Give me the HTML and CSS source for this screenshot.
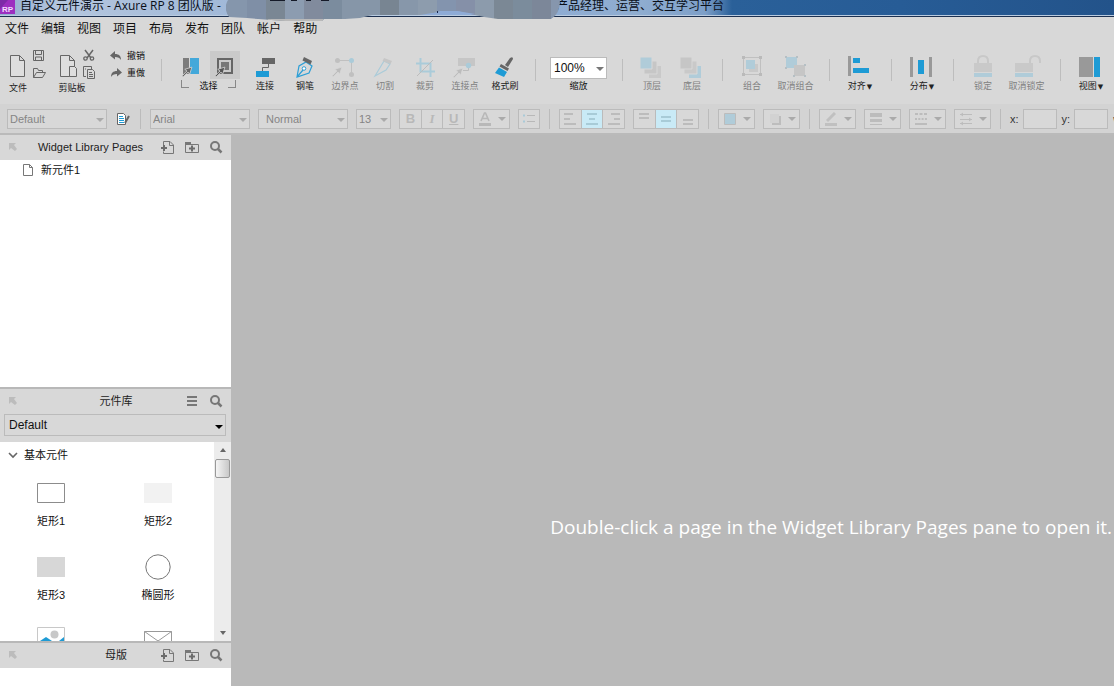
FILE: index.html
```html
<!DOCTYPE html>
<html lang="zh-CN">
<head>
<meta charset="utf-8">
<title>自定义元件演示 - Axure RP 8 团队版</title>
<link rel="stylesheet" href="styles.css">
</head>
<body>
<svg class="defs" aria-hidden="true">
  <symbol id="i-dock" viewBox="0 0 8 8"><path d="M0 0h7L5 2l3 4-2 2-4-3-2 2z" fill="#bcbcbc"/></symbol>
  <symbol id="i-addpage" viewBox="0 0 14 14"><path d="M2.500 5V1.500h6.500l3.500 3.500v8.500h-10v-2M8.500 1.500v4h4" fill="none" stroke="#777"/><path d="M0 8h6M3 5v6" stroke="#6c6c6c" stroke-width="2"/></symbol>
  <symbol id="i-addfolder" viewBox="0 0 14 14"><path d="M.5 12.500v-10h5v2h8v8z" fill="none" stroke="#777"/><path d="M0 2h6v3H0z" fill="#777"/><path d="M4 8.500h6M7 5.500v6" stroke="#6c6c6c" stroke-width="2"/></symbol>
  <symbol id="i-search" viewBox="0 0 14 14"><circle cx="6" cy="6" r="4" fill="none" stroke="#777" stroke-width="2"/><path d="M8.500 8.500l4 4" stroke="#777" stroke-width="2.500"/></symbol>
  <symbol id="i-pointer" viewBox="0 0 10 10"><path d="M9 1L2.500 3l2 1.500L0 9l1 1 4.500-4.500L7 7.500z" fill="currentColor" stroke="#d8d8d8" stroke-width=".7"/></symbol>
</svg>

<header class="titlebar">
  <svg class="logo" viewBox="0 0 15 14"><rect width="15" height="14" fill="#9c2fc0"/><path d="M0 0h8L0 9z" fill="#7d2aa8"/><text x="2" y="12" class="logo-text">RP</text></svg>
  <span class="title-left">自定义元件演示 - Axure RP 8 团队版 -</span>
  <span class="title-right">产品经理、运营、交互学习平台</span>
  <svg class="mosaic" viewBox="226 0 336 21" width="336" height="21">
    <defs><clipPath id="blob"><path d="M228 0Q223 8 229 17L247 18 258 19 285 21H322L324 19H345L360 18 372 15 420 15 432 13H445L457 11 475 15 484 17 498 19H551Q560 14 560 0z"/></clipPath></defs>
    <g clip-path="url(#blob)">
      <path fill="#8596ac" d="M226 0h21v21h-21z"/><path fill="#7f8fa6" d="M247 0h19v21h-19z"/><path fill="#7a8794" d="M266 0h19v21h-19z"/><path fill="#8c9cb0" d="M285 0h19v21h-19z"/><path fill="#818b9d" d="M304 0h19v21h-19z"/><path fill="#7b8c9e" d="M323 0h19v21h-19z"/><path fill="#8696a8" d="M342 0h38v21h-38z"/><path fill="#788592" d="M380 0h19v21h-19z"/><path fill="#8797aa" d="M399 0h19v21h-19z"/><path fill="#8d9cad" d="M418 0h19v21h-19z"/><path fill="#8394ae" d="M437 0h19v21h-19z"/><path fill="#8590a8" d="M456 0h19v21h-19z"/><path fill="#8c9bac" d="M475 0h19v21h-19z"/><path fill="#7b8895" d="M494 0h19v21h-19z"/><path fill="#7b8c9c" d="M513 0h19v21h-19z"/><path fill="#7c8799" d="M532 0h19v21h-19z"/><path fill="#8696ad" d="M551 0h11v21h-11z"/>
      <path fill="#b9b9b9" d="M268 19h55v2h-55z"/>
    </g>
    <path d="M270 .5h15M291 .5h6M306 .5h5M321 .5h8" stroke="#151a28"/>
    <path d="M430 14l10-3h17l18 3z" fill="#8eabd6"/><path d="M437.500 11v2" stroke="#17264a"/>
  </svg>
</header>

<nav class="menubar">
  <button>文件</button><button>编辑</button><button>视图</button><button>项目</button><button>布局</button><button>发布</button><button>团队</button><button>帐户</button><button>帮助</button>
</nav>

<section class="toolbar" aria-label="工具栏">
  <div class="filegroup">
    <button class="tool low"><svg viewBox="0 0 18 28" width="18" height="28"><path d="M1.500 3.500h9l5 5v16h-14zM10.500 3.500v5h5" fill="#dedede" stroke="#666"/></svg>文件</button>
    <div class="stack">
      <button aria-label="保存"><svg viewBox="0 0 14 13" width="14" height="13"><path d="M1.500 1.500h10v10h-10zM3.500 1.500v4h6v-4M3.500 11v-3h6v3" fill="none" stroke="#666"/></svg></button>
      <button aria-label="打开"><svg viewBox="0 0 14 13" width="14" height="13"><path d="M1.500 11.500v-9h4l1 2h4v2M1.500 11.500l3-5h9l-3 5z" fill="none" stroke="#666"/></svg></button>
    </div>
    <button class="tool low paste"><svg viewBox="0 0 22 28" width="22" height="28"><path d="M2.500 3.500h9l5 5v16h-14zM11.500 3.500v5h5" fill="#dedede" stroke="#666"/><path d="M11.500 14.500h5l2 2v8h-7z" fill="#dedede" stroke="#666"/></svg>剪贴板</button>
    <div class="stack">
      <button aria-label="剪切"><svg viewBox="0 0 14 13" width="14" height="13"><path d="M3 1l6 8M11 1L5 9" stroke="#666" stroke-width="1.500"/><circle cx="3.500" cy="9.500" r="1.700" fill="none" stroke="#666" stroke-width="1.300"/><circle cx="10" cy="9.500" r="1.700" fill="none" stroke="#666" stroke-width="1.300"/></svg></button>
      <button aria-label="复制"><svg viewBox="0 0 14 13" width="14" height="13"><path d="M4 10.500H1.500v-10h8V3M5.500 3.500h5l2 2v7h-7zM7 6.500h3M7 8.500h4M7 10.500h4M3 3h1" fill="none" stroke="#666"/></svg></button>
    </div>
    <div class="undo">
      <button><svg viewBox="0 0 12 10" width="12" height="10"><path d="M5 0v3c4 0 6 2 6 6-1-2-3-3-6-3v2.500L0 4.500z" fill="#666"/></svg>撤销</button>
      <button><svg viewBox="0 0 12 10" width="12" height="10"><path d="M7 0v3C3 3 1 5 1 9c1-2 3-3 6-3v2.500l5-4z" fill="#666"/></svg>重做</button>
    </div>
  </div>
  <i class="sep"></i>
  <div class="selectgroup">
    <div class="pair">
      <button aria-label="相交选择"><svg viewBox="0 0 30 28" width="30" height="28"><path d="M3 7h6v16H3z" fill="#7c7c7c"/><path d="M10 7h9v16h-9z" fill="#43a8da"/><svg x="2" y="15" width="11" height="11" color="#666"><use href="#i-pointer"/></svg></svg></button>
      <button class="on" aria-label="包含选择"><svg viewBox="0 0 30 28" width="30" height="28"><path d="M8 8h14v14H8z" fill="none" stroke="#666" stroke-width="2"/><path d="M11 11h8v8h-8z" fill="#777"/><svg x="5" y="15" width="11" height="11" color="#555"><use href="#i-pointer"/></svg></svg></button>
    </div>
    <div class="bracket"><i></i><span>选择</span><i class="r"></i></div>
  </div>
  <button class="tool"><svg viewBox="0 0 32 28" width="32" height="28"><path d="M13 5h13v6H13z" fill="#666"/><path d="M19.500 11v3.500h-6V18" fill="none" stroke="#666"/><path d="M7 18h13v6H7z" fill="#1e9bd5"/></svg>连接</button>
  <button class="tool"><svg viewBox="0 0 32 28" width="32" height="28"><path d="M8 24l2-11 7-4 6 4-3 7zM8 24l6-7" fill="none" stroke="#2d9fd6" stroke-width="1.200"/><circle cx="15" cy="15.500" r="1.800" fill="#fff" stroke="#2d9fd6"/><path d="M15 4l8 4-1.500 3.500-8-4z" fill="#666"/></svg>钢笔</button>
  <button class="tool" disabled><svg viewBox="0 0 32 28" width="32" height="28"><path d="M9 7.500h13.500V21" fill="none" stroke="#c0c0c0"/><circle cx="8.500" cy="7.500" r="2.500" fill="#c0c0c0"/><circle cx="22.500" cy="7.500" r="2.500" fill="#aacbd9"/><circle cx="22.500" cy="21.500" r="2.500" fill="#c0c0c0"/><svg x="3" y="13" width="11" height="11" color="#bcbcbc"><use href="#i-pointer"/></svg></svg>边界点</button>
  <button class="tool" disabled><svg viewBox="0 0 32 28" width="32" height="28"><path d="M6 23l9-15 6 3-4 6z" fill="none" stroke="#aacbd9" stroke-width="1.200"/><path d="M15 5l8 3-1.500 3-8-3z" fill="#c6c6c6"/></svg>切割</button>
  <button class="tool" disabled><svg viewBox="0 0 32 28" width="32" height="28"><path d="M11.500 5v13.500H26M7 10.500h14.500V24" fill="none" stroke="#aacbd9" stroke-width="2"/><path d="M8 23L24 7" stroke="#bcbcbc"/></svg>裁剪</button>
  <button class="tool" disabled><svg viewBox="0 0 32 28" width="32" height="28"><path d="M9 5h17v8H9z" fill="#c6c6c6"/><path d="M19.500 12v5.500H14" fill="none" stroke="#bcbcbc"/><circle cx="19.500" cy="12.500" r="2.700" fill="#aacbd9"/><svg x="4" y="14" width="11" height="11" color="#bcbcbc"><use href="#i-pointer"/></svg></svg>连接点</button>
  <button class="tool"><svg viewBox="0 0 32 28" width="32" height="28"><path d="M21 5q3-2 3 1l-5 8-3-2z" fill="#666"/><path d="M12 11l8 4.500-1.500 2.500-8-4.500z" fill="#666"/><path d="M10 14.500l8 4.500-3 5-9-4z" fill="#1e9bd5"/></svg>格式刷</button>
  <i class="sep"></i>
  <label class="zoom"><span class="drop white"><select><option>100%</option></select></span>缩放</label>
  <i class="sep"></i>
  <button class="tool" disabled><svg viewBox="0 0 32 28" width="32" height="28"><path d="M13 13h12v12H13z" fill="#c9c9c9"/><path d="M8 8h13v13H8z" fill="#c6c6c6" stroke="#d8d8d8"/><path d="M4 4h12v12H4z" fill="#b0ccd9" stroke="#d8d8d8"/></svg>顶层</button>
  <button class="tool" disabled><svg viewBox="0 0 32 28" width="32" height="28"><path d="M13 13h12v12H13z" fill="#b0ccd9"/><path d="M8 8h13v13H8z" fill="#c9c9c9" stroke="#d8d8d8"/><path d="M4 4h12v12H4z" fill="#c6c6c6" stroke="#d8d8d8"/></svg>底层</button>
  <i class="sep"></i>
  <button class="tool" disabled><svg viewBox="0 0 32 28" width="32" height="28"><path d="M7.500 4.500h17v17h-17z" fill="none" stroke="#c0c0c0"/><path d="M13 11h9v8h-9z" fill="#c9c9c9"/><path d="M10 7h9v9h-9z" fill="#b0ccd9"/><path d="M6 3h3v3H6zM23 3h3v3h-3zM6 20h3v3H6zM23 20h3v3h-3z" fill="#bababa"/></svg>组合</button>
  <button class="tool wide" disabled><svg viewBox="0 0 32 28" width="32" height="28"><path d="M6 4h11v11H6z" fill="#b0ccd9"/><path d="M14 12h11v11H14z" fill="#c6c6c6"/><path d="M5 3h2v2H5zM16 3h2v2h-2zM5 14h2v2H5zM24 11h2v2h-2zM13 22h2v2h-2zM24 22h2v2h-2z" fill="#b5bfc4"/></svg>取消组合</button>
  <i class="sep"></i>
  <button class="tool"><svg viewBox="0 0 32 28" width="32" height="28"><path d="M4 3h3v20H4z" fill="#999"/><path d="M9 5h7v5H9zM9 15h16v5H9z" fill="#1e9bd5"/></svg><span>对齐<b>▼</b></span></button>
  <i class="sep"></i>
  <button class="tool"><svg viewBox="0 0 32 28" width="32" height="28"><path d="M4 4h3v20H4zM23 4h3v20h-3z" fill="#999"/><path d="M12 7h6v14h-6z" fill="#1e9bd5"/></svg><span>分布<b>▼</b></span></button>
  <i class="sep"></i>
  <button class="tool" disabled><svg viewBox="0 0 32 28" width="32" height="28"><path d="M11 11V8q0-5 5-5t5 5v3" fill="none" stroke="#c8c8c8" stroke-width="2"/><path d="M7 10h18v9H7z" fill="#c9c9c9"/><path d="M7 20h18v4H7z" fill="#b0ccd9"/></svg>锁定</button>
  <button class="tool wide" disabled><svg viewBox="0 0 32 28" width="32" height="28"><path d="M19 11V8q0-5 5-5t5 5v2" fill="none" stroke="#c8c8c8" stroke-width="2"/><path d="M4 10h18v9H4z" fill="#c9c9c9"/><path d="M4 20h18v4H4z" fill="#b0ccd9"/></svg>取消锁定</button>
  <i class="sep"></i>
  <button class="tool"><svg viewBox="0 0 32 28" width="32" height="28"><path d="M4 4h14v20H4z" fill="#999"/><path d="M19 4h6v20h-6z" fill="#1e9bd5"/></svg><span>视图<b>▼</b></span></button>
</section>

<section class="formatbar" aria-label="格式">
  <span class="drop w100"><select disabled aria-label="样式"><option>Default</option></select></span>
  <button class="plain" aria-label="样式管理"><svg viewBox="0 0 16 16" width="16" height="16"><path d="M2.500 2.500h6l2 2v9h-8z" fill="#fff" stroke="#666"/><path d="M4 5.500h4M4 7.500h5M4 9.500h5M4 11.500h5" stroke="#1e9bd5"/><path d="M14 5l-4 7" stroke="#666" stroke-width="2"/></svg></button>
  <i class="sep"></i>
  <span class="drop w100"><select disabled aria-label="字体"><option>Arial</option></select></span>
  <span class="drop w90"><select disabled aria-label="字重"><option>Normal</option></select></span>
  <span class="drop w35"><select disabled aria-label="字号"><option>13</option></select></span>
  <div class="seg"><button disabled><b>B</b></button><button disabled><em>I</em></button><button disabled><u>U</u></button></div>
  <button class="pick" disabled aria-label="文字颜色"><svg viewBox="0 0 14 14" width="14" height="14"><path d="M3 9l3.500-8h1L11 9M4.500 6.500h5" fill="none" stroke="#b8b8b8" stroke-width="1.600"/><path d="M1 11h12v3H1z" fill="#b8b8b8"/></svg></button>
  <button class="box" disabled aria-label="项目符号"><svg viewBox="0 0 14 14" width="14" height="14"><path d="M1 3.500h2M1 9.500h2" stroke="#a9cad8" stroke-width="2"/><path d="M5 3.500h8M5 9.500h8" stroke="#b8b8b8"/></svg></button>
  <i class="sep"></i>
  <div class="seg"><button disabled aria-label="左对齐"><svg viewBox="0 0 14 14" width="14" height="14"><path d="M1 2h9M1 7h6M1 12h12" stroke="#bcbcbc" stroke-width="2"/></svg></button><button class="lit" disabled aria-label="居中"><svg viewBox="0 0 14 14" width="14" height="14"><path d="M2 2h10M4 7h6M1 12h12" stroke="#a8cbd7" stroke-width="2"/></svg></button><button disabled aria-label="右对齐"><svg viewBox="0 0 14 14" width="14" height="14"><path d="M4 2h9M7 7h6M1 12h12" stroke="#bcbcbc" stroke-width="2"/></svg></button></div>
  <div class="seg"><button disabled aria-label="顶部"><svg viewBox="0 0 14 14" width="14" height="14"><path d="M2 2h10M2 6h10" stroke="#bcbcbc" stroke-width="2"/></svg></button><button class="lit" disabled aria-label="中部"><svg viewBox="0 0 14 14" width="14" height="14"><path d="M2 5h10M2 9h10" stroke="#a8cbd7" stroke-width="2"/></svg></button><button disabled aria-label="底部"><svg viewBox="0 0 14 14" width="14" height="14"><path d="M2 8h10M2 12h10" stroke="#bcbcbc" stroke-width="2"/></svg></button></div>
  <i class="sep"></i>
  <button class="pick" disabled aria-label="填充"><svg viewBox="0 0 14 14" width="14" height="14"><path d="M1.500 1.500h11v11h-11z" fill="#b0ccd9" stroke="#bcbcbc"/></svg></button>
  <button class="pick" disabled aria-label="阴影"><svg viewBox="0 0 14 14" width="14" height="14"><path d="M4 4h9v9H4z" fill="#bdbdbd"/><path d="M2 2h9v9H2z" fill="#d2d2d2"/></svg></button>
  <i class="sep"></i>
  <button class="pick" disabled aria-label="线条颜色"><svg viewBox="0 0 14 14" width="14" height="14"><path d="M3 9l8-8" stroke="#c0c0c0" stroke-width="3"/><path d="M1 11h12v3H1z" fill="#c0c0c0"/></svg></button>
  <button class="pick" disabled aria-label="线宽"><svg viewBox="0 0 14 14" width="14" height="14"><path d="M1 1h12v4H1zM1 7h12v3H1zM1 12h12v1H1z" fill="#bcbcbc"/></svg></button>
  <button class="pick" disabled aria-label="线型"><svg viewBox="0 0 14 14" width="14" height="14"><path d="M1 2h12" stroke="#bcbcbc" stroke-width="2" stroke-dasharray="3 1.500"/><path d="M1 7h12" stroke="#bcbcbc" stroke-width="2" stroke-dasharray="2 1.300"/><path d="M1 12h12" stroke="#bcbcbc" stroke-width="2"/></svg></button>
  <button class="pick" disabled aria-label="箭头"><svg viewBox="0 0 14 14" width="14" height="14"><path d="M1 2.500h12M1 7.500h12M1 11.500h12M4 1L2 2.500 4 4M10 6l2 1.500L10 9M4 10l-2 1.500L4 13" fill="none" stroke="#bcbcbc"/></svg></button>
  <i class="sep"></i>
  <label class="coord">x: <input type="text" disabled></label>
  <label class="coord">y: <input type="text" disabled></label>
  <label class="coord">w: <input type="text" disabled></label>
</section>

<main class="work">
  <aside class="side">
    <section class="panel">
      <div class="head offset"><svg width="8" height="8"><use href="#i-dock"/></svg><h2>Widget Library Pages</h2>
        <div class="acts"><button aria-label="添加页面"><svg width="14" height="14"><use href="#i-addpage"/></svg></button><button aria-label="添加文件夹"><svg width="14" height="14"><use href="#i-addfolder"/></svg></button><button aria-label="搜索"><svg width="14" height="14"><use href="#i-search"/></svg></button></div></div>
      <div class="page"><svg viewBox="0 0 10 12" width="10" height="12"><path d="M.5.5h6l3 3v8h-9zM6.500.5v3h3" fill="#fff" stroke="#777"/></svg>新元件1</div>
    </section>
    <section class="panel">
      <div class="head"><svg width="8" height="8"><use href="#i-dock"/></svg><h2>元件库</h2>
        <div class="acts"><button aria-label="菜单"><svg viewBox="0 0 14 14" width="14" height="14"><path d="M2 3h10M2 7h10M2 11h10" stroke="#777" stroke-width="2"/></svg></button><button aria-label="搜索"><svg width="14" height="14"><use href="#i-search"/></svg></button></div></div>
      <div class="libpick"><span class="drop dark"><select aria-label="选择元件库"><option>Default</option></select></span></div>
      <div class="lib">
        <div class="libbody">
          <h3><svg viewBox="0 0 10 8" width="10" height="8"><path d="M1 2l4 4 4-4" fill="none" stroke="#666" stroke-width="1.600"/></svg>基本元件</h3>
          <div class="grid">
            <div class="item"><svg viewBox="0 0 28 28" width="28" height="28"><path d="M.5 4.500h27v19H.5z" fill="#fff" stroke="#8c8c8c"/></svg>矩形1</div>
            <div class="item"><svg viewBox="0 0 28 28" width="28" height="28"><path d="M0 4h28v20H0z" fill="#f2f2f2"/></svg>矩形2</div>
            <div class="item"><svg viewBox="0 0 28 28" width="28" height="28"><path d="M0 4h28v20H0z" fill="#d7d7d7"/></svg>矩形3</div>
            <div class="item"><svg viewBox="0 0 28 28" width="28" height="28"><circle cx="14" cy="14" r="12.200" fill="#fff" stroke="#777"/></svg>椭圆形</div>
            <div class="item"><svg viewBox="0 0 28 28" width="28" height="28"><path d="M.5.500h27v27H.5z" fill="#fff" stroke="#c8c8c8"/><circle cx="17.500" cy="7.500" r="4" fill="#c8c8c8"/><path d="M3 14l6-4 6 4 7 0 5-4v17H3z" fill="#1e9bd5"/></svg>图片</div>
            <div class="item"><svg viewBox="0 0 28 28" width="28" height="28"><path d="M.5 4.500h27v19H.5zM.5 4.500L14 14 27.500 4.500M.5 23.500L14 14l13.500 9.500" fill="#fff" stroke="#999"/></svg>占位符</div>
          </div>
        </div>
        <div class="scroll" aria-hidden="true"><i class="up"></i><i class="thumb"></i><i class="down"></i></div>
      </div>
    </section>
    <section class="panel">
      <div class="head"><svg width="8" height="8"><use href="#i-dock"/></svg><h2>母版</h2>
        <div class="acts"><button aria-label="添加母版"><svg width="14" height="14"><use href="#i-addpage"/></svg></button><button aria-label="添加文件夹"><svg width="14" height="14"><use href="#i-addfolder"/></svg></button><button aria-label="搜索"><svg width="14" height="14"><use href="#i-search"/></svg></button></div></div>
    </section>
  </aside>
  <section class="canvas"><p>Double-click a page in the Widget Library Pages pane to open it.</p></section>
</main>
</body>
</html>
```
FILE: styles.css
```css
* { box-sizing: border-box; }
html, body { height: 100%; margin: 0; }
body {
  display: flex;
  flex-direction: column;
  overflow: hidden;
  background: #d8d8d8;
  color: #111;
  font: 11px/16px "Liberation Sans", "Noto Sans CJK SC", sans-serif;
  white-space: nowrap;
}
button {
  display: flex;
  align-items: center;
  justify-content: center;
  padding: 0;
  border: 0;
  background: none;
  color: inherit;
  font: inherit;
}
svg { display: block; flex: none; }
h2, h3, p { margin: 0; font: inherit; }
.defs { position: absolute; width: 0; height: 0; }

/* title bar */
.titlebar {
  position: relative;
  display: flex;
  flex: none;
  height: 17px;
  border-bottom: 1px solid #1c3050;
  box-shadow: inset 0 -1px #b9cbe0;
  background: linear-gradient(90deg, #93add0 0, #b4c6de 60px, #a4bbd9 200px, #8eabd6 440px, #8fadd0 640px, #7d9fc8 705px, #2a6099 732px, #275c96 900px, #23538a 100%);
  font: 12px/12px "Open Sans", "Noto Sans CJK SC", sans-serif;
  color: #0a0f18;
}
.logo { width: 15px; height: 14px; }
.logo-text { font: bold 8px "Liberation Sans", sans-serif; fill: #f3dcff; }
.title-left { width: 541px; padding-left: 5px; }
.mosaic { position: absolute; left: 226px; top: 0; }

/* menu */
.menubar { display: flex; flex: none; gap: 12px; height: 24px; padding: 0 5px; font-size: 12px; }

/* toolbar */
.toolbar { display: flex; flex: none; height: 63px; padding-top: 12px; font-size: 9px; line-height: 12px; }
.sep { flex: none; width: 20px; height: 22px; margin-top: 6px; background: linear-gradient(#bdbdbd, #bdbdbd) center / 1px 100% no-repeat; }
.tool { flex: none; flex-direction: column; justify-content: flex-start; width: 40px; height: 42px; color: #222; }
.tool:disabled { color: #808080; }
.tool svg { margin-bottom: -1px; }
.toolbar > .sep + .tool:not(:disabled) { width: 42px; }
.tool.wide { width: 47px; }
.tool b { margin-left: 1px; font: 7px/12px "DejaVu Sans", sans-serif; }
.filegroup { display: flex; flex: none; width: 151px; padding-left: 8px; }
.filegroup .low { width: 20px; }
.filegroup .low svg { margin: -1px 0 2px; }
.filegroup .paste { width: 28px; margin-left: 12px; }
.filegroup .paste svg { margin-right: 6px; }
.stack { display: flex; flex-direction: column; gap: 4px; width: 14px; margin: -4px 0 0 4px; }
.paste + .stack { margin-left: -4px; }
.undo { display: flex; flex-direction: column; gap: 5px; margin: -3px 0 0 14px; }
.undo button { gap: 5px; }
.selectgroup { flex: none; width: 74px; padding-left: 9px; margin-top: -2px; }
.pair, .bracket { display: flex; width: 60px; }
.on { background: #cacaca; }
.bracket { justify-content: space-between; padding: 1px 4px 0 1px; }
.bracket i { width: 8px; height: 8px; border: solid #888; border-width: 0 0 1px 1px; }
.bracket .r { border-width: 0 1px 1px 0; }
.zoom { display: flex; flex: none; flex-direction: column; align-items: center; width: 67px; padding-top: 4px; }

/* drop-downs */
.drop { position: relative; display: block; flex: none; height: 20px; }
.drop select {
  display: block;
  width: 100%;
  height: 100%;
  padding: 0 2px;
  border: 1px solid #bbb;
  border-radius: 0;
  background: #d8d8d8;
  color: #858585;
  font: 11px "Liberation Sans", sans-serif;
  appearance: none;
  opacity: 1;
}
.drop::after, .pick::after {
  content: "";
  border: solid transparent;
  border-width: 4px 4px 0;
  border-top-color: #aaa;
}
.drop::after { position: absolute; right: 3px; top: 9px; pointer-events: none; }
.white { width: 57px; height: 22px; margin-bottom: 1px; }
.white select { background: #fff; color: #111; font-size: 12px; padding: 0 3px; }
.white::after { top: 10px; border-top-color: #777; }
.w100 { width: 100px; }
.w90 { width: 90px; }
.w90 select { padding-left: 7px; }
.w35 { width: 35px; }

/* format bar */
.formatbar {
  display: flex;
  flex: none;
  align-items: center;
  gap: 8px;
  height: 31px;
  padding: 1px 0 0 7px;
  border-bottom: 2px solid #bababa;
  background: #d3d3d3;
}
.formatbar .sep { width: 1px; height: 20px; margin: 0 1px; background: #bbb; }
.plain { flex: none; width: 16px; }
.seg { display: flex; flex: none; width: 66px; height: 20px; border: 1px solid #bbb; background: #d8d8d8; }
.seg button { flex: 1; color: #b8b8b8; font-size: 13px; }
.seg button + button { border-left: 1px solid #bbb; }
.seg em { font-family: "Liberation Serif", serif; font-weight: bold; }
.seg u { font-weight: bold; }
.lit { background: #c9eaf6; }
.pick, .box { flex: none; width: 37px; height: 20px; gap: 6px; border: 1px solid #bbb; background: #d8d8d8; }
.box { width: 22px; }
.coord { display: flex; flex: none; align-items: center; gap: 4px; margin-right: -3px; color: #333; }
.coord input { width: 34px; height: 20px; padding: 0 2px; border: 1px solid #bbb; background: #d8d8d8; }

/* side panels */
.work { display: flex; flex: 1; min-height: 0; }
.side { display: grid; flex: none; grid-template-rows: 252fr 254fr 45fr; width: 231px; background: #fff; }
.panel { display: flex; flex-direction: column; min-height: 0; overflow: hidden; border-top: 2px solid #b8b8b8; }
.panel:first-child { border-top: 0; }
.head { display: grid; flex: none; grid-template-columns: 1fr auto 1fr; align-items: center; height: 25px; padding: 0 8px 2px 9px; background: #d8d8d8; color: #222; }
.head.offset { display: flex; }
.offset h2 { flex: 1; padding-left: 3px; text-align: center; }
.acts { display: flex; justify-content: flex-end; gap: 10px; }
.page { display: flex; align-items: center; gap: 8px; padding: 2px 0 0 23px; }
.libpick { flex: none; padding: 0 5px 6px 4px; background: #d8d8d8; }
.dark { height: 22px; }
.dark select { color: #111; font-size: 12px; padding: 0 4px; }
.dark::after { top: 11px; border-top-color: #000; }
.lib { display: flex; flex: 1; min-height: 0; overflow: hidden; }
.libbody { flex: 1; }
.libbody h3 { display: flex; align-items: center; gap: 6px; padding: 5px 8px 16px; }
.grid { display: grid; grid-template-columns: 102px 1fr; grid-auto-rows: 74px; }
.item { display: flex; flex-direction: column; align-items: center; gap: 6px; }
.scroll { display: flex; flex: none; flex-direction: column; align-items: center; width: 17px; padding: 6px 0; background: #ececec; }
.up, .down { border: solid transparent; border-width: 0 3px 4px; border-bottom-color: #666; }
.down { margin-top: auto; border-width: 4px 3px 0; border-top-color: #666; }
.thumb { width: 15px; height: 19px; margin-top: 7px; border: 1px solid #999; border-radius: 2px; background: linear-gradient(90deg, #f5f5f5, #c8c8c8); }

/* canvas */
.canvas {
  display: flex;
  flex: 1;
  align-items: flex-end;
  justify-content: flex-end;
  padding: 0 2px 145px 0;
  background: #b9b9b9;
  color: #fff;
  font: 19px/28px "Open Sans", "Noto Sans", sans-serif;
}
```
